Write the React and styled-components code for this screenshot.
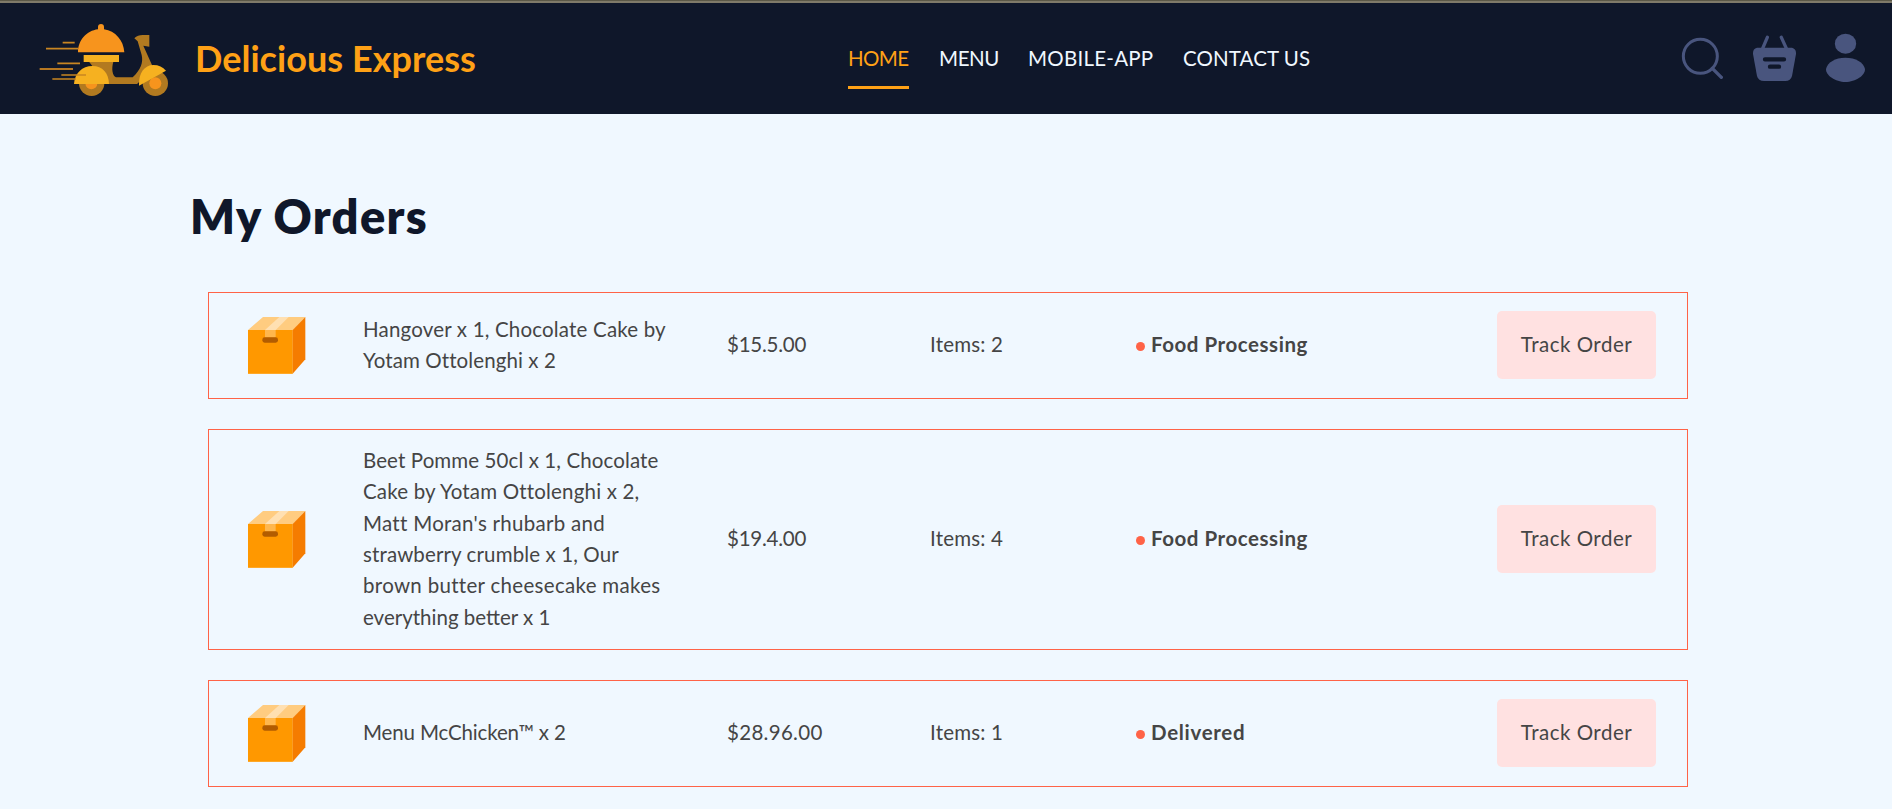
import React from "react";
import styled, { createGlobalStyle } from "styled-components";

const GlobalStyle = createGlobalStyle`
  * { box-sizing: border-box; }
  body {
    margin: 0;
    background: #f0f8ff;
    font-family: Lato, "Open Sans", sans-serif;
    overflow: hidden;
  }
`;

const Header = styled.header`
  display: grid;
  grid-template-columns: 818px 1fr auto;
  align-items: center;
  height: 114px;
  padding: 3px 26px 0 30px;
  background: linear-gradient(#5b5847 0 1px, #7f7a69 1px 3px, #0f172a 3px);
`;

const Brand = styled.a`
  display: flex;
  align-items: center;
  gap: 15px;
  height: 90px;
  margin-top: 3px;
`;

const BrandName = styled.span`
  color: #ffa116;
  font-size: 36px;
  font-weight: 700;
  line-height: 44px;
  letter-spacing: 0.04px;
  margin-bottom: 5px;
`;

const Nav = styled.nav`
  display: flex;
  gap: 30px;
  height: 60px;
`;

const NavLink = styled.a`
  width: ${(p) => p.$width}px;
  height: 60px;
  padding-top: 16px;
  color: ${(p) => (p.$active ? "#ffa116" : "#f0f8ff")};
  border-bottom: 3px solid ${(p) => (p.$active ? "#ffa116" : "transparent")};
  font-size: 20.5px;
  line-height: 26px;
  letter-spacing: ${(p) => p.$tracking}px;
  white-space: nowrap;
`;

const Tools = styled.div`
  display: flex;
  align-items: center;
  gap: 29px;
  svg { display: block; }
  svg:last-child { margin-bottom: 1px; }
`;

const Main = styled.main`
  padding: 73px 204px 0 208px;
`;

const Heading = styled.h1`
  margin: 0 0 47px -18px;
  color: #0f172a;
  font-size: 47px;
  font-weight: 800;
  line-height: 58px;
  letter-spacing: 1.3px;
`;

const Orders = styled.section`
  display: flex;
  flex-direction: column;
  gap: 30px;
`;

const Order = styled.article`
  display: grid;
  grid-template-columns: 116px 364px 203px 206px 361px 159px;
  align-items: center;
  height: ${(p) => (p.$tall ? 221 : 107)}px;
  padding-left: 38px;
  border: 1px solid tomato;
  color: #454545;
  font-size: 20.5px;
  line-height: 31.33px;
  svg { display: block; }
`;

const Cell = styled.div`
  padding-bottom: 1px;
`;

const Line = styled.span`
  display: block;
  white-space: nowrap;
  letter-spacing: ${(p) => p.$tracking}px;
`;

const Status = styled(Cell)`
  display: flex;
  align-items: center;
  gap: 6px;
  font-weight: 700;
`;

const Dot = styled.i`
  width: 9px;
  height: 9px;
  margin-top: 3px;
  border-radius: 50%;
  background: tomato;
`;

const TrackButton = styled.button`
  height: 68px;
  margin-bottom: 1px;
  padding: 0 0 2px;
  border: 0;
  border-radius: 5px;
  background: #ffe1e1;
  color: #454545;
  font: 400 20.5px/31px Lato, "Open Sans", sans-serif;
  letter-spacing: 0.51px;
`;

const ScooterLogo = () => (
  <svg width="150" height="90" viewBox="0 0 450 270">
    <circle cx="185" cy="205" r="38" fill="#b27a20" />
    <circle cx="376" cy="205" r="38" fill="#b27a20" />
    <circle cx="184" cy="205" r="18" fill="#f7941d" />
    <circle cx="376" cy="205" r="18" fill="#f7941d" />
    <path d="M177 140H250C244 162 247 181 258 187H308C333 163 340 143 335 120L323 79L313 70Q323 60 338 60H358V95L340 92L366 150L366 165L321 207H230Z" fill="#b27a20" />
    <path d="M132 207C134 174 157 153 187 153C218 153 236 174 237 207Z" fill="#f6b120" />
    <path d="M327 212C325 174 344 150 370 150Q394 150 408 167Z" fill="#f6b120" />
    <rect x="161" y="120" width="106" height="21" fill="#f6b120" />
    <path d="M144 112C144 76 170 47 204 43V36A9 9 0 0 1 222 36V43C256 48 281 76 283 112Z" fill="#f7941d" />
    <g stroke="#c98622" strokeWidth="5">
      <path d="M98 83H134M48 101H144M82 145H150M94 180H168M67 192H138" />
      <path d="M29 162H129" stroke="#f19a20" />
    </g>
  </svg>
);

const SearchIcon = () => (
  <svg width="42" height="43" viewBox="63 111 126 129" fill="none" stroke="#49557e">
    <circle cx="121" cy="169" r="51" strokeWidth="9" />
    <path d="M157 205L184 232" strokeWidth="10" strokeLinecap="round" />
  </svg>
);

const BasketIcon = () => (
  <svg width="44" height="47" viewBox="276 105 132 141">
    <path d="M322 112L308 145M364 112L379 145" stroke="#49557e" strokeWidth="10" strokeLinecap="round" />
    <path d="M291 143H396Q409 146 408 162L396 228Q392 243 376 243H312Q295 243 291 228L279 162Q278 146 291 143Z" fill="#49557e" />
    <path d="M315 178H372M330 200H357" stroke="#0f172a" strokeWidth="13" strokeLinecap="round" />
  </svg>
);

const UserIcon = () => (
  <svg width="41" height="50" viewBox="495 99 123 150" fill="#49557e">
    <ellipse cx="556.5" cy="131" rx="32" ry="30" />
    <path d="M498 207C502 187 526 173 556 173C587 173 611 187 615 207C616 226 587 246 556 246C526 246 497 226 498 207Z" />
  </svg>
);

const ParcelIcon = () => (
  <svg width="59" height="59" viewBox="201 438 177 177">
    <path d="M204 480L249 441H376L338 481V611H204Z" fill="#ffcc80" />
    <path d="M204 480H338V611H204Z" fill="#ff9800" />
    <path d="M338 480L376 441V568L338 611Z" fill="#f57c00" />
    <path d="M255 480L298 441H326L287 480Z" fill="#ffe0b2" />
    <path d="M255 480H287V503H255Z" fill="#ffb74d" />
    <rect x="247" y="502" width="47" height="16" rx="7" fill="#b25c00" />
  </svg>
);

const links = [
  { label: "HOME", width: 61, tracking: -0.6, active: true },
  { label: "MENU", width: 59, tracking: -0.4 },
  { label: "MOBILE-APP", width: 125, tracking: 0.25 },
  { label: "CONTACT US", width: 128, tracking: 0.1 },
];

const orders = [
  {
    lines: [
      ["Hangover x 1, Chocolate Cake by", 0.18],
      ["Yotam Ottolenghi x 2", 0.1],
    ],
    price: ["$15.5.00", -0.23],
    items: "Items: 2",
    status: ["Food Processing", 0.54],
  },
  {
    tall: true,
    lines: [
      ["Beet Pomme 50cl x 1, Chocolate", 0.1],
      ["Cake by Yotam Ottolenghi x 2,", 0.18],
      ["Matt Moran's rhubarb and", 0.28],
      ["strawberry crumble x 1, Our", 0.12],
      ["brown butter cheesecake makes", 0.31],
      ["everything better x 1", 0],
    ],
    price: ["$19.4.00", -0.23],
    items: "Items: 4",
    status: ["Food Processing", 0.54],
  },
  {
    lines: [["Menu McChicken™ x 2", -0.14]],
    price: ["$28.96.00", 0.3],
    items: "Items: 1",
    status: ["Delivered", 0.69],
  },
];

export default function App() {
  return (
    <>
      <GlobalStyle />
      <Header>
        <Brand>
          <ScooterLogo />
          <BrandName>Delicious Express</BrandName>
        </Brand>
        <Nav>
          {links.map((l) => (
            <NavLink key={l.label} $width={l.width} $tracking={l.tracking} $active={l.active}>
              {l.label}
            </NavLink>
          ))}
        </Nav>
        <Tools>
          <SearchIcon />
          <BasketIcon />
          <UserIcon />
        </Tools>
      </Header>
      <Main>
        <Heading>My Orders</Heading>
        <Orders>
          {orders.map((o, i) => (
            <Order key={i} $tall={o.tall}>
              <ParcelIcon />
              <Cell>
                {o.lines.map(([text, tracking]) => (
                  <Line key={text} $tracking={tracking}>{text}</Line>
                ))}
              </Cell>
              <Cell>
                <Line $tracking={o.price[1]}>{o.price[0]}</Line>
              </Cell>
              <Cell>
                <Line $tracking={0.2}>{o.items}</Line>
              </Cell>
              <Status>
                <Dot />
                <Line $tracking={o.status[1]}>{o.status[0]}</Line>
              </Status>
              <TrackButton>Track Order</TrackButton>
            </Order>
          ))}
        </Orders>
      </Main>
    </>
  );
}
